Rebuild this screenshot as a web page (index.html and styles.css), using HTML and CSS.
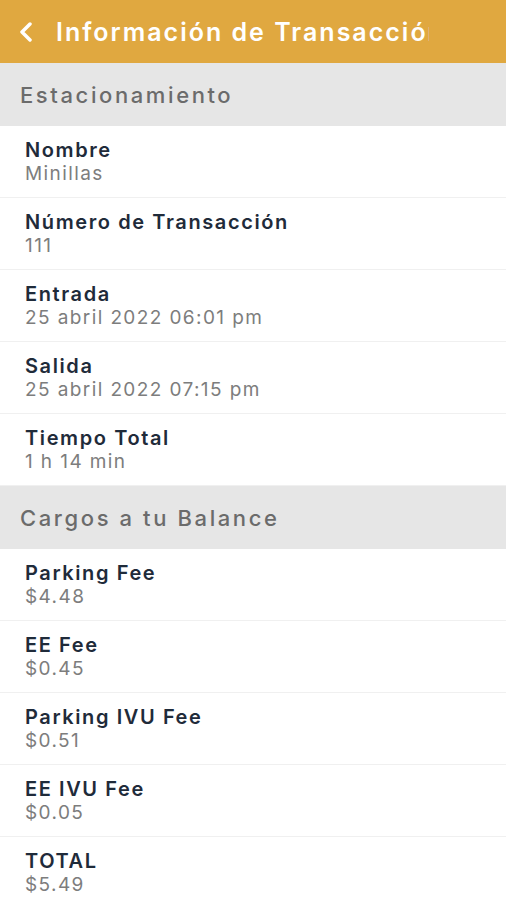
FILE: index.html
```html
<!DOCTYPE html>
<html lang="es">
<head>
    <meta charset="UTF-8">
    <meta name="viewport" content="width=device-width, initial-scale=1.0">
    <title>Información de Transacción</title>
    <link rel="stylesheet" href="styles.css">
</head>
<body>
    <div class="app-bar">
        <svg class="back" width="16" height="20" viewBox="0 0 16 20">
            <path d="M12 2 L4 10 L12 18" fill="none" stroke="#ffffff" stroke-width="3.5" stroke-linecap="round" stroke-linejoin="round"/>
        </svg>
        <div class="app-title">Información de Transacción</div>
    </div>

    <div class="section">Estacionamiento</div>
    <div class="row">
        <div class="label">Nombre</div>
        <div class="value">Minillas</div>
    </div>
    <div class="row">
        <div class="label">Número de Transacción</div>
        <div class="value">111</div>
    </div>
    <div class="row">
        <div class="label">Entrada</div>
        <div class="value">25 abril 2022 06:01 pm</div>
    </div>
    <div class="row">
        <div class="label">Salida</div>
        <div class="value">25 abril 2022 07:15 pm</div>
    </div>
    <div class="row">
        <div class="label">Tiempo Total</div>
        <div class="value">1 h 14 min</div>
    </div>

    <div class="section">Cargos a tu Balance</div>
    <div class="row">
        <div class="label">Parking Fee</div>
        <div class="value">$4.48</div>
    </div>
    <div class="row">
        <div class="label">EE Fee</div>
        <div class="value">$0.45</div>
    </div>
    <div class="row">
        <div class="label">Parking IVU Fee</div>
        <div class="value">$0.51</div>
    </div>
    <div class="row">
        <div class="label">EE IVU Fee</div>
        <div class="value">$0.05</div>
    </div>
    <div class="row">
        <div class="label">TOTAL</div>
        <div class="value">$5.49</div>
    </div>
</body>
</html>
```

FILE: styles.css
```css
body {
    margin: 0;
    padding: 0;
    background-color: #ffffff;
    font-family: 'Inter', sans-serif;
    overflow: hidden;
}
.app-bar {
    height: 63px;
    background-color: #E0A840;
    display: flex;
    align-items: center;
    padding-left: 18px;
    gap: 22px;
}
.back {
    flex-shrink: 0;
}
/* el titulo se corta igual que en la app */
.app-title {
    color: #ffffff;
    font-size: 25px;
    font-weight: 600;
    letter-spacing: 2px;
    white-space: nowrap;
    overflow: hidden;
    width: 373px;
}
.section {
    height: 63px;
    background-color: #E6E6E6;
    color: #6b6b6b;
    font-size: 22px;
    font-weight: 500;
    letter-spacing: 2.6px;
    display: flex;
    align-items: center;
    padding-left: 20px;
}
.row {
    height: 71px;
    border-bottom: 1px solid #F0F0F0;
    padding-left: 25px;
    display: flex;
    flex-direction: column;
    justify-content: center;
}
.label {
    color: #1F2B3A;
    font-size: 20px;
    font-weight: 600;
    letter-spacing: 1.6px;
    line-height: 24px;
}
.value {
    color: #7d7d7d;
    font-size: 19px;
    letter-spacing: 1.4px;
    line-height: 24px;
}
```
